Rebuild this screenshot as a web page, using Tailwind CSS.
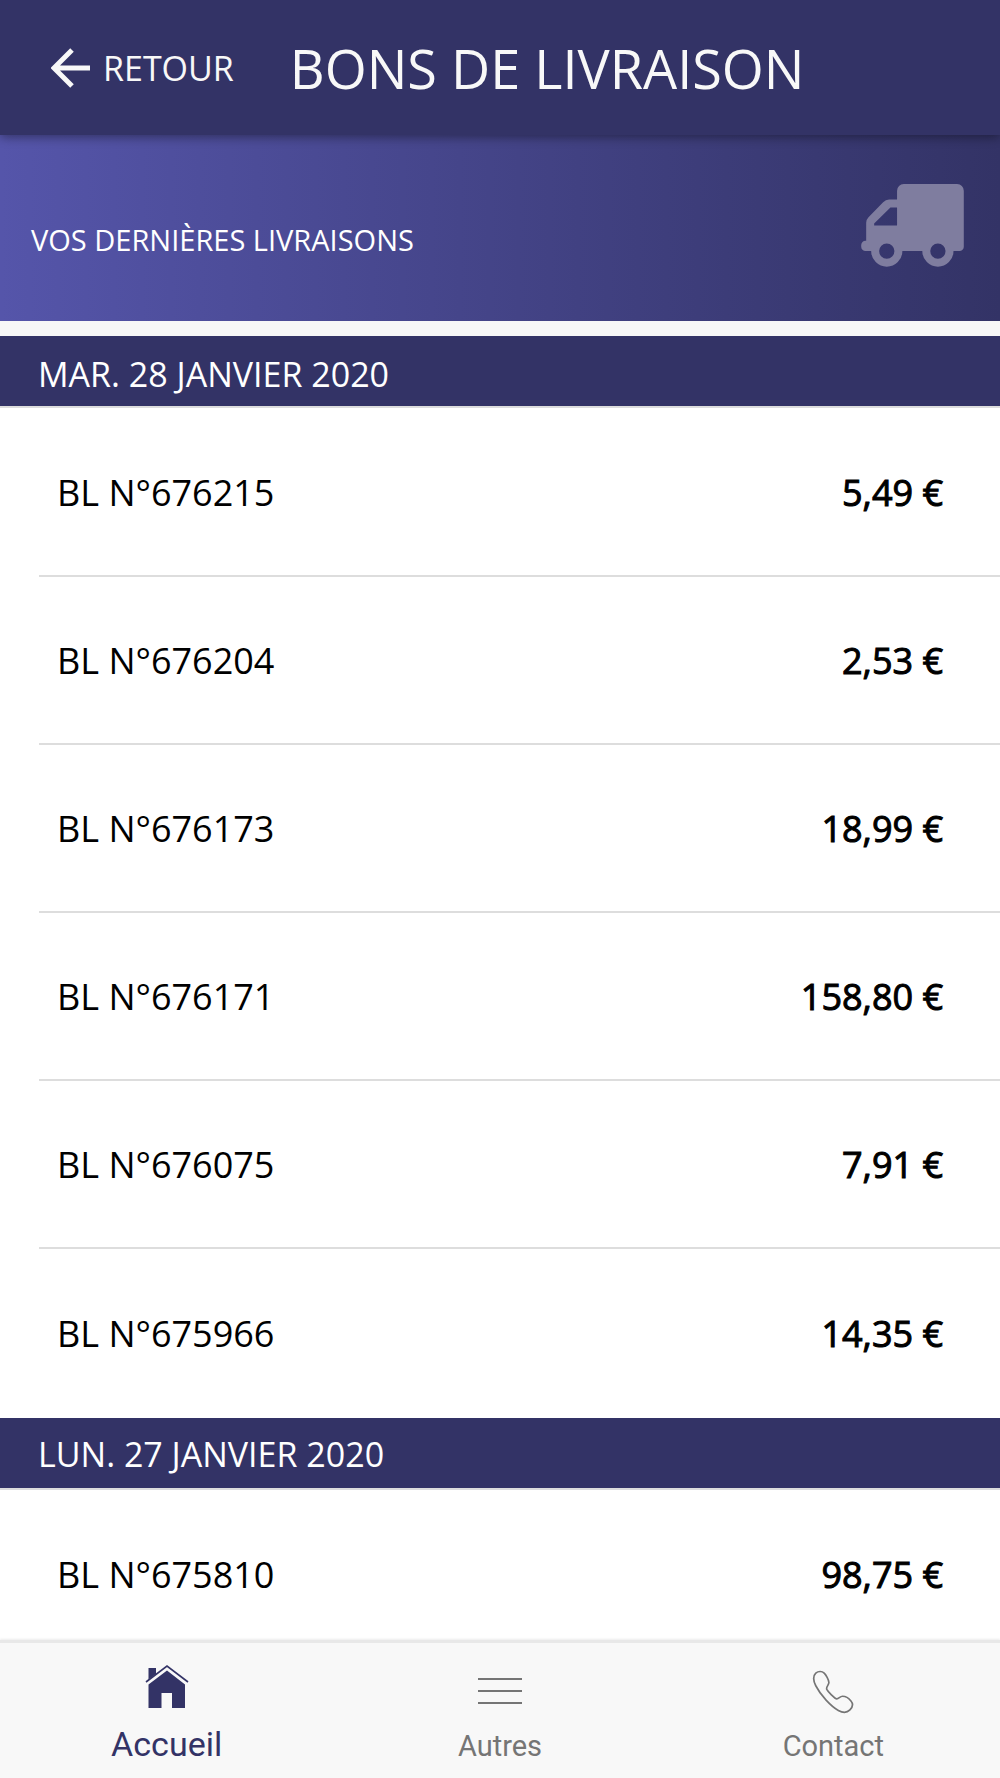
<!DOCTYPE html>
<html lang="fr">
<head>
<meta charset="utf-8">
<meta name="viewport" content="width=device-width, initial-scale=1">
<title>Bons de livraison</title>
<script src="https://cdn.jsdelivr.net/npm/@tailwindcss/browser@4"></script>
</head>
<body class="flex h-dvh flex-col overflow-hidden bg-white font-['Open_Sans',sans-serif] text-black">
  <header class="relative z-10 flex h-[135px] shrink-0 items-center gap-14 bg-[#333366] pl-[51px] text-[#f8f8f8] shadow-[0_2px_10px_rgba(0,0,0,0.4)]">
    <button type="button" class="flex items-center gap-3 text-[34px] leading-[48px]">
      <svg class="size-10" viewBox="0 0 40 40" fill="none" stroke="currentColor" stroke-width="5" aria-hidden="true"><path d="M39 20H4M21 2 3 20l18 18"/></svg>
      RETOUR
    </button>
    <h1 class="text-[54px] leading-[72px]">BONS DE LIVRAISON</h1>
  </header>

  <main class="flex-1 overflow-x-hidden overflow-y-auto [scrollbar-width:none]">
    <section class="flex h-[186px] items-center justify-between bg-linear-to-r from-[#5555aa] to-[#333366] pt-[5px] pr-9 pl-[31px] text-white">
      <h2 class="pt-[18px] text-[29px] leading-10">VOS DERNIÈRES LIVRAISONS</h2>
      <svg class="mb-[10px] h-[83px] w-[103px] shrink-0" viewBox="33 41 309 250" fill="#7f7d9f" aria-hidden="true">
        <path fill-rule="evenodd" d="M161 41H322a20 20 0 0 1 20 20V230a13 13 0 0 1-13 13H311a47 47 0 0 1-94 0H157a47 47 0 0 1-94 0H46a13 13 0 0 1-13-13V225a13 13 0 0 1 13-13h2V158q0-10 7-17L99 96q8-8 18-8h24V61a20 20 0 0 1 20-20ZM141 112H121L72 160v6H141ZM110 220a23 23 0 1 0 0 46a23 23 0 1 0 0-46ZM264 220a23 23 0 1 0 0 46a23 23 0 1 0 0-46Z"/>
      </svg>
    </section>

    <section class="border-t-[15px] border-[#f7f7f7]">
      <h3 class="h-[72px] border-b-2 border-[#dddddd] bg-[#333366] pl-[38px] text-[34px] leading-[76px] text-white">MAR. 28 JANVIER 2020</h3>
      <ul class="divide-y-2 divide-[#dddddd] pt-px pb-px pl-[39px]">
        <li class="flex h-[168px] items-center justify-between pt-[2px] pr-[57px] pl-[18px] text-[36px] leading-[48px]"><span>BL N°676215</span><span class="[-webkit-text-stroke:1px_black]">5,49 €</span></li>
        <li class="flex h-[168px] items-center justify-between pt-[2px] pr-[57px] pl-[18px] text-[36px] leading-[48px]"><span>BL N°676204</span><span class="[-webkit-text-stroke:1px_black]">2,53 €</span></li>
        <li class="flex h-[168px] items-center justify-between pt-[2px] pr-[57px] pl-[18px] text-[36px] leading-[48px]"><span>BL N°676173</span><span class="[-webkit-text-stroke:1px_black]">18,99 €</span></li>
        <li class="flex h-[168px] items-center justify-between pt-[2px] pr-[57px] pl-[18px] text-[36px] leading-[48px]"><span>BL N°676171</span><span class="[-webkit-text-stroke:1px_black]">158,80 €</span></li>
        <li class="flex h-[168px] items-center justify-between pt-[2px] pr-[57px] pl-[18px] text-[36px] leading-[48px]"><span>BL N°676075</span><span class="[-webkit-text-stroke:1px_black]">7,91 €</span></li>
        <li class="flex h-[168px] items-center justify-between pt-[2px] pr-[57px] pl-[18px] text-[36px] leading-[48px]"><span>BL N°675966</span><span class="[-webkit-text-stroke:1px_black]">14,35 €</span></li>
      </ul>
    </section>

    <section>
      <h3 class="h-[72px] border-b-2 border-[#dddddd] bg-[#333366] pl-[38px] text-[34px] leading-[72px] text-white">LUN. 27 JANVIER 2020</h3>
      <ul class="pl-[39px]">
        <li class="flex h-[168px] items-center justify-between pt-[2px] pr-[57px] pl-[18px] text-[36px] leading-[48px]"><span>BL N°675810</span><span class="[-webkit-text-stroke:1px_black]">98,75 €</span></li>
      </ul>
    </section>
  </main>

  <nav class="relative z-10 grid h-[138px] shrink-0 grid-cols-3 border-t-3 border-[#e8e8e8] bg-[#f8f8f8] font-[Roboto,sans-serif] text-[#757575] shadow-[0_-1px_2px_rgba(0,0,0,0.08)]">
    <a href="#accueil" class="flex flex-col items-center gap-4 pt-[21px] text-[#333366]">
      <svg class="size-11" viewBox="0 0 44 44" fill="currentColor" aria-hidden="true"><path d="M3.500 20.500 22 6.500 40 20.500v23.500H27V29H16.500v15H3.500ZM3.500 4H11v6L3.500 15.500Z"/><path d="M1 18 22 2 43 18" fill="none" stroke="currentColor" stroke-width="1.600"/></svg>
      <span class="text-[34px] leading-[40px]">Accueil</span>
    </a>
    <a href="#autres" class="flex flex-col items-center gap-[14px] pt-[27px]">
      <svg class="size-11" viewBox="0 0 44 44" fill="none" stroke="currentColor" stroke-width="2" aria-hidden="true"><path d="M0 9h44M0 21h44M0 33h44"/></svg>
      <span class="text-[29px] leading-[36px]">Autres</span>
    </a>
    <a href="#contact" class="flex flex-col items-center gap-[14px] pt-[27px]">
      <svg class="size-11" viewBox="0 0 44 44" fill="none" stroke="currentColor" stroke-width="1.600" aria-hidden="true"><path d="M5.500 3C3 5.500 3 10 5.500 15c4.500 9 14.500 19.500 21.500 23.500 4.500 2.500 8.500 2 11-.500 3-3 3.500-5.500 1-8.500-2-2.500-5.500-4.500-8-4.500-2.500 0-3.500 2.500-5.500 2.500-2 0-8.500-7-9.500-9-1-2.500 2-4 2-6.500 0-3-3-7.500-4.500-9C11.500 1 8 .800 5.500 3Z" transform="translate(-1 0) scale(1.050)"/></svg>
      <span class="text-[29px] leading-[36px]">Contact</span>
    </a>
  </nav>
</body>
</html>
